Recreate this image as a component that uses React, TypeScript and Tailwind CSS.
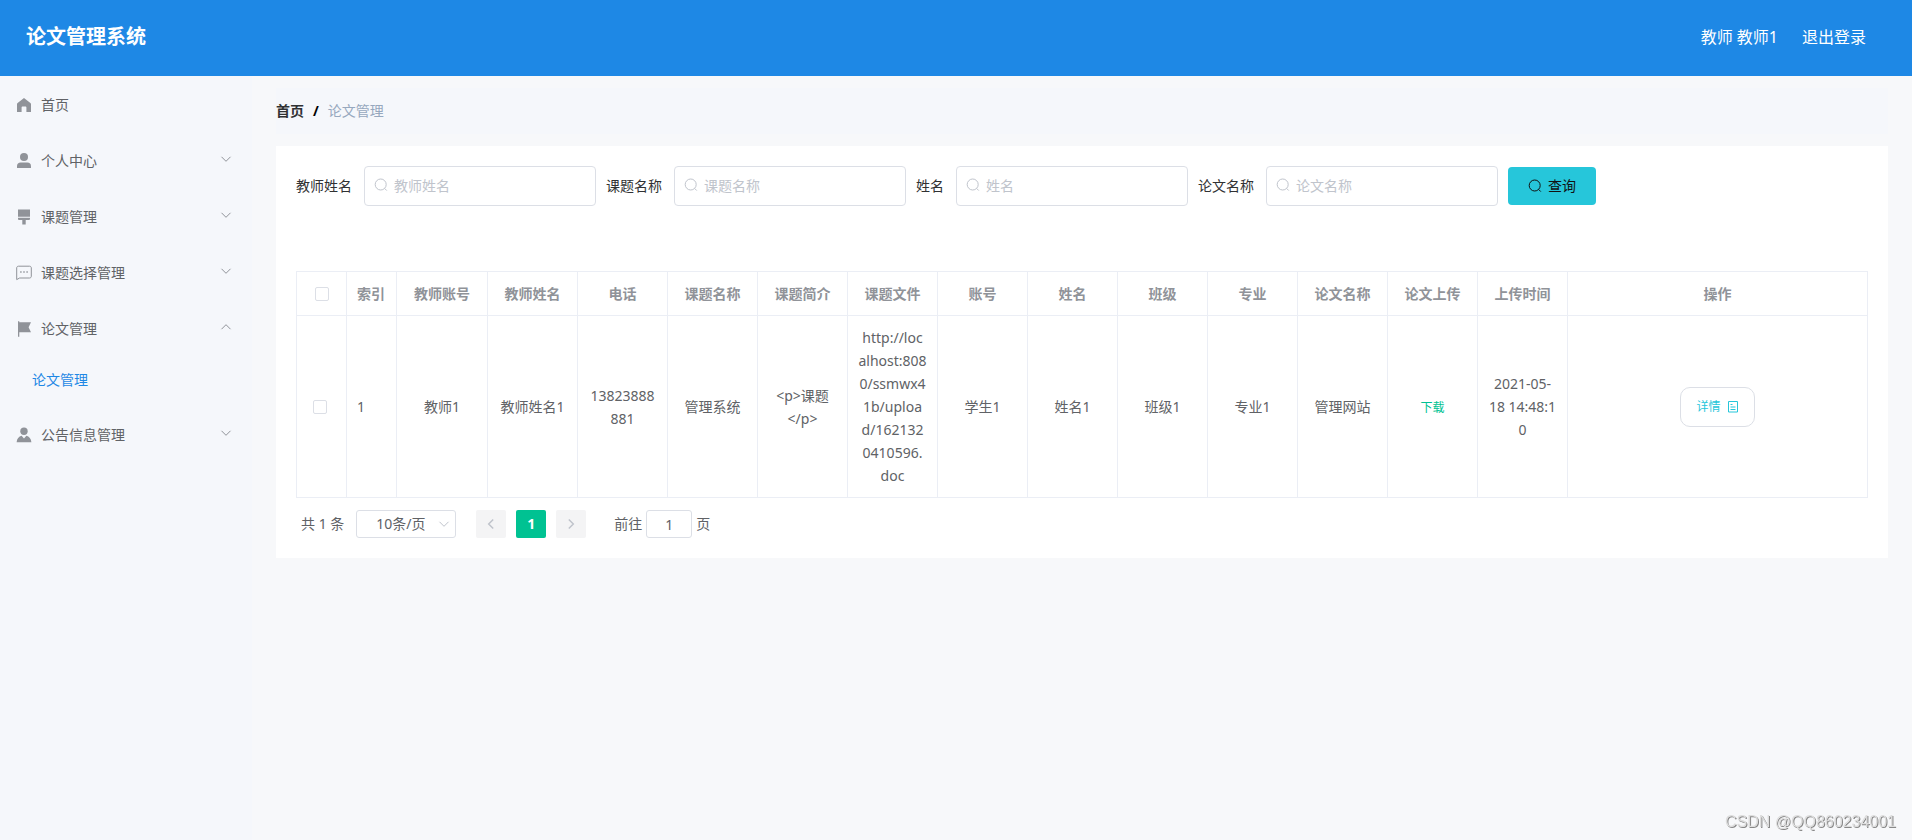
import { ReactNode, useState } from "react";

interface MenuItem {
  label: string;
  icon: ReactNode;
  children?: string[];
}

interface Paper {
  id: number;
  cells: string[];
  createdAt: string;
}

const HomeIcon = (
  <svg viewBox="0 0 14 14" className="size-3.5" fill="currentColor">
    <path d="M7 0 13.4 5c.4.3.6.7.6 1.2V14H9.400V9.500c0-.6-.4-1-1-1H5.600c-.6 0-1 .4-1 1V14H0V6.200c0-.5.2-.9.6-1.200Z" />
  </svg>
);

const PersonIcon = (
  <svg viewBox="0 0 14 14" className="size-3.5 overflow-visible" fill="currentColor">
    <circle cx="7" cy="3" r="4" />
    <path d="M0 14v-1.800C0 10 1.400 8.600 3.600 8.600h6.800c2.200 0 3.600 1.400 3.600 3.600V14Z" />
  </svg>
);

const BrushIcon = (
  <svg viewBox="0 0 14 14" className="size-3.5 overflow-visible" fill="currentColor">
    <path d="M1-.5h12v7.200H1ZM1 7.800h12v.9c0 .8-.5 1.300-1.300 1.300H8.700v4.500H5.300V10H2.300C1.500 10 1 9.500 1 8.700Z" />
  </svg>
);

const ChatIcon = (
  <svg viewBox="0 0 14 14" className="size-3.5 overflow-visible" fill="none" stroke="currentColor">
    <path d="M-.3 13.600V2C-.3.900.400.200 1.500.200h11c1.100 0 1.800.700 1.800 1.800v8.200c0 1.100-.700 1.800-1.800 1.800H2.600Z" />
    <path d="M3.200 6h1.400M6.300 6h1.400M9.400 6h1.400" strokeWidth="1.400" />
  </svg>
);

const FlagIcon = (
  <svg viewBox="0 0 14 14" className="size-3.5 overflow-visible" fill="currentColor">
    <path d="M1-.8h1.300v15.600H1ZM2.300.200H14l-2.400 5 2.400 5H2.300Z" />
  </svg>
);

const UserIcon = (
  <svg viewBox="0 0 14 14" className="size-3.5 overflow-visible" fill="currentColor">
    <circle cx="7" cy="3.200" r="3.700" />
    <path d="M4.600 7.800 7 10.400l2.400-2.600c2.800.8 4.700 3 5 6.400H-.4c.3-3.400 2.200-5.600 5-6.400Z" />
  </svg>
);

function SearchIcon({ className }: { className?: string }) {
  return (
    <svg viewBox="0 0 14 14" className={className} fill="none" stroke="currentColor">
      <circle cx="6.700" cy="6.500" r="5.500" />
      <path d="m10.600 10.400 2.200 2.200" />
    </svg>
  );
}

function Chevron({ className }: { className?: string }) {
  return (
    <svg viewBox="0 0 12 12" className={className} fill="none" stroke="currentColor">
      <path d="m1.500 3.800 4.500 4.500 4.500-4.500" />
    </svg>
  );
}

function DocumentIcon() {
  return (
    <svg viewBox="0 0 12 12" className="size-3" fill="none" stroke="currentColor">
      <path d="M1.500.500h9v10.500h-9ZM3.500 3.500h2M3.500 6h5M3.500 8.500h5" />
    </svg>
  );
}

const MENU: MenuItem[] = [
  { label: "个人中心", icon: PersonIcon, children: [] },
  { label: "课题管理", icon: BrushIcon, children: [] },
  { label: "课题选择管理", icon: ChatIcon, children: [] },
  { label: "论文管理", icon: FlagIcon, children: ["论文管理"] },
  { label: "公告信息管理", icon: UserIcon, children: [] },
];

const FILTERS = ["教师姓名", "课题名称", "姓名", "论文名称"];

const COLUMNS = [
  "教师账号", "教师姓名", "电话", "课题名称", "课题简介", "课题文件", "账号",
  "姓名", "班级", "专业", "论文名称", "论文上传", "上传时间",
];

const PAPERS: Paper[] = [
  {
    id: 1,
    cells: [
      "教师1", "教师姓名1", "13823888881", "管理系统", "<p>课题\n</p>",
      "http://loc\nalhost:808\n0/ssmwx4\n1b/uploa\nd/162132\n0410596.\ndoc",
      "学生1", "姓名1", "班级1", "专业1", "管理网站",
    ],
    createdAt: "2021-05-\n18 14:48:1\n0",
  },
];

const cell = "border border-[#ebeef5] px-2.5";
const checkbox = "block size-3.5 appearance-none rounded-xs border border-[#dcdfe6] bg-white checked:bg-[#00c292]";

function Sidebar() {
  const [open, setOpen] = useState("论文管理");

  return (
    <nav className="w-[252px] shrink-0 bg-[#f5f7fb] text-[#606266]">
      <a href="#" className="flex h-[57px] items-center gap-2.5 px-[17px]">
        <span className="text-[#909399]">{HomeIcon}</span>
        首页
      </a>
      {MENU.map((m) => (
        <div key={m.label}>
          <button
            type="button"
            onClick={() => setOpen(open === m.label ? "" : m.label)}
            className="flex h-14 w-full items-center gap-2.5 pl-[17px] pr-5 text-left"
          >
            <span className="text-[#909399]">{m.icon}</span>
            <span className="flex-1">{m.label}</span>
            <Chevron className={open === m.label ? "mb-1 size-3 rotate-180 text-[#909399]" : "mb-1 size-3 text-[#909399]"} />
          </button>
          {open === m.label && m.children?.map((c) => (
            <a key={c} href="#" className="flex h-[50px] items-center px-8 pb-1 text-[#1e88e5]">{c}</a>
          ))}
        </div>
      ))}
    </nav>
  );
}

function SearchForm() {
  return (
    <form className="flex flex-wrap items-center gap-2.5 text-[#303133]" onSubmit={(e) => e.preventDefault()}>
      {FILTERS.map((f) => (
        <div key={f} className="flex items-center gap-3">
          <label htmlFor={f}>{f}</label>
          <div className="relative">
            <SearchIcon className="absolute left-2.5 top-3 size-3.5 text-[#c0c4cc]" />
            <input
              id={f}
              placeholder={f}
              className="block h-10 w-[232px] rounded border border-[#dcdfe6] bg-white pb-0.5 pl-[29px] pr-3 outline-none placeholder:text-[#c0c4cc]"
            />
          </div>
        </div>
      ))}
      <button type="submit" className="flex h-[38px] items-center gap-1.5 rounded-sm bg-[#26c6da] px-5 text-[#111]">
        <SearchIcon className="size-3.5" />
        查询
      </button>
    </form>
  );
}

function PapersTable() {
  return (
    <table className="mt-[65px] w-full table-fixed border-collapse text-center leading-[23px] text-[#606266]">
      <colgroup>
        <col className="w-[50px]" />
        <col className="w-[50px]" />
        {COLUMNS.map((c, i) => <col key={c} className={i === 0 ? "w-[91px]" : "w-[90px]"} />)}
        <col />
      </colgroup>
      <thead>
        <tr className="h-11 text-[#909399]">
          <th className={cell}>
            <input type="checkbox" aria-label="全选" className={`${checkbox} mx-auto`} />
          </th>
          <th className={`${cell} text-left`}>索引</th>
          {COLUMNS.map((c) => <th key={c} className={cell}>{c}</th>)}
          <th className={cell}>操作</th>
        </tr>
      </thead>
      <tbody>
        {PAPERS.map((p) => (
          <tr key={p.id}>
            <td className="border border-[#ebeef5] pl-4">
              <input type="checkbox" aria-label={`选择 ${p.id}`} className={checkbox} />
            </td>
            <td className={`${cell} text-left`}>{p.id}</td>
            {p.cells.map((c, i) => (
              <td key={i} className={`${cell} whitespace-pre-line break-all py-2.5`}>{c}</td>
            ))}
            <td className={cell}>
              <a href="#" className="text-xs text-[#00c292]">下载</a>
            </td>
            <td className={`${cell} whitespace-pre-line break-all`}>{p.createdAt}</td>
            <td className={cell}>
              <button
                type="button"
                className="mx-auto flex h-10 items-center gap-1.5 rounded-[10px] border border-[#dcdfe6] px-[15px] text-xs text-[#26c6da]"
              >
                详情
                <DocumentIcon />
              </button>
            </td>
          </tr>
        ))}
      </tbody>
    </table>
  );
}

function Pagination() {
  const arrow = "flex h-7 w-[30px] items-center justify-center rounded-xs bg-[#f4f4f5] text-[#c0c4cc]";

  return (
    <div className="mt-3 flex h-7 items-center pl-[5px] text-[#606266]">
      <span>共 {PAPERS.length} 条</span>
      <div className="relative ml-3">
        <select
          aria-label="每页条数"
          className="block h-7 w-[100px] appearance-none rounded-[3px] border border-[#dcdfe6] bg-white pl-[19px] outline-none"
        >
          <option>10条/页</option>
          <option>20条/页</option>
        </select>
        <Chevron className="pointer-events-none absolute right-1.5 top-2 size-3 text-[#c0c4cc]" />
      </div>
      <div className="ml-5 flex gap-2.5">
        <button type="button" aria-label="上一页" disabled className={arrow}>
          <Chevron className="size-3 rotate-90 stroke-[1.5]" />
        </button>
        <button type="button" className="h-7 w-[30px] rounded-xs bg-[#00c292] font-bold text-white">1</button>
        <button type="button" aria-label="下一页" disabled className={arrow}>
          <Chevron className="size-3 -rotate-90 stroke-[1.5]" />
        </button>
      </div>
      <label className="ml-7 flex items-center gap-1">
        前往
        <input defaultValue="1" className="block h-7 w-[46px] rounded-[3px] border border-[#dcdfe6] bg-white text-center outline-none" />
        页
      </label>
    </div>
  );
}

export default function App() {
  return (
    <div className="flex min-h-screen flex-col bg-[#f7f8fa] font-['Noto_Sans','Noto_Sans_CJK_SC',sans-serif] text-sm">
      <header className="flex h-[76px] items-center justify-between bg-[#1e88e5] pb-0.5 pl-[26px] pr-[46px] text-white">
        <h1 className="text-xl font-bold">论文管理系统</h1>
        <div className="flex gap-6 text-base">
          <span>教师 教师1</span>
          <a href="#">退出登录</a>
        </div>
      </header>

      <div className="flex flex-1">
        <Sidebar />
        <main className="min-w-0 flex-1 px-6 pt-3">
          <div className="flex h-[46px] items-center gap-[9px] bg-[#f5f7fb]">
            <a href="#" className="font-bold text-[#303133]">首页</a>
            <span className="font-bold text-black">/</span>
            <span className="text-[#97a8be]">论文管理</span>
          </div>
          <section className="mt-3 bg-white p-5">
            <SearchForm />
            <PapersTable />
            <Pagination />
          </section>
        </main>
      </div>

      <div className="pointer-events-none fixed bottom-1.5 right-4 font-['Liberation_Sans',sans-serif] text-base text-[#ddd] [text-shadow:1px_1px_0_#888]">
        CSDN @QQ860234001
      </div>
    </div>
  );
}
